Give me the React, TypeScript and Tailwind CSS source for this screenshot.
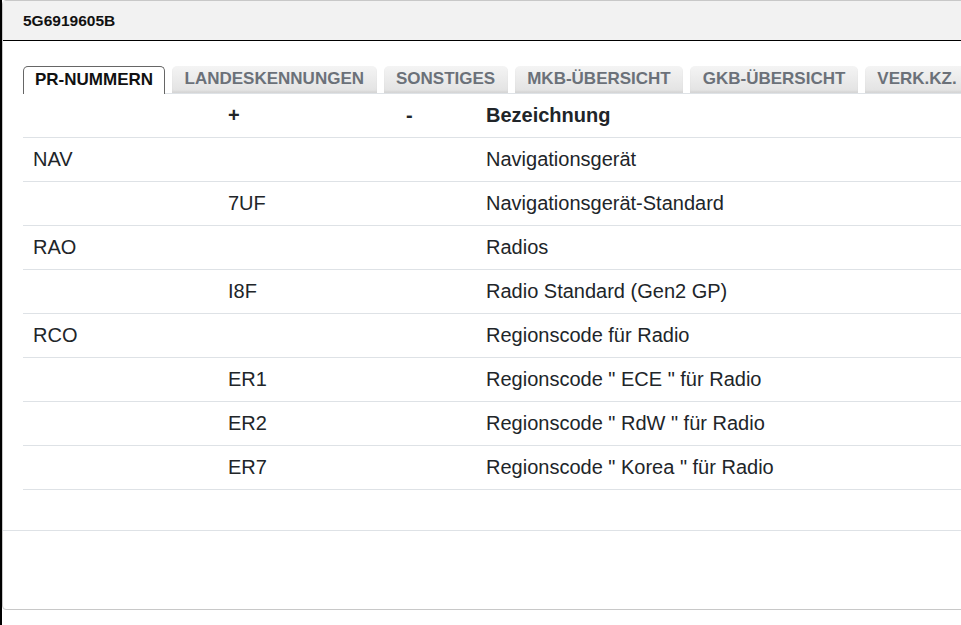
import React from "react";

const tabs = [
  "PR-NUMMERN",
  "LANDESKENNUNGEN",
  "SONSTIGES",
  "MKB-ÜBERSICHT",
  "GKB-ÜBERSICHT",
  "VERK.KZ.",
];

const rows: [string, string, string, string][] = [
  ["NAV", "", "", "Navigationsgerät"],
  ["", "7UF", "", "Navigationsgerät-Standard"],
  ["RAO", "", "", "Radios"],
  ["", "I8F", "", "Radio Standard (Gen2 GP)"],
  ["RCO", "", "", "Regionscode für Radio"],
  ["", "ER1", "", 'Regionscode " ECE " für Radio'],
  ["", "ER2", "", 'Regionscode " RdW " für Radio'],
  ["", "ER7", "", 'Regionscode " Korea " für Radio'],
];

export default function App() {
  return (
    <div
      className="flex h-[625px] w-[961px] overflow-hidden bg-white"
      style={{ fontFamily: '"Liberation Sans", Arial, sans-serif' }}
    >
      <div className="w-[2px] shrink-0 bg-black" />
      <div className="flex h-[610px] w-[1000px] shrink-0 flex-col rounded-l-[4px] border border-[#c8c8c8] bg-white">
        <div className="flex h-[40px] shrink-0 items-center border-b border-black bg-[#f2f2f2] pl-[20px] text-[15.5px] font-bold text-[#111]">
          5G6919605B
        </div>
        <div className="flex flex-col pl-[20px] pt-[25px]">
          <div className="flex items-end gap-[7px] border-b border-[#dee2e6]">
            {tabs.map((t, i) =>
              i === 0 ? (
                <div
                  key={t}
                  className="-mb-px flex h-[28px] items-center rounded-t-[5px] border border-b-0 border-[#666] bg-white px-[11px] pb-[1px] text-[17px] font-bold text-[#111]"
                >
                  {t}
                </div>
              ) : (
                <div
                  key={t}
                  className="flex h-[27px] items-center rounded-t-[5px] bg-gradient-to-b from-[#f4f4f4] to-[#e2e2e2] px-[12.5px] pb-[1px] text-[17px] font-bold text-[#6b7179] shadow-[inset_0_-2px_2px_rgba(0,0,0,0.06)]"
                >
                  {t}
                </div>
              )
            )}
          </div>
          <div className="text-[20px] text-[#212529]">
            <div className="grid h-[44px] grid-cols-[195px_178px_80px_1fr] items-center border-b border-[#dee2e6] pb-[2px] font-bold">
              <div className="px-[10px]"></div>
              <div className="px-[10px]">+</div>
              <div className="px-[10px]">-</div>
              <div className="px-[10px]">Bezeichnung</div>
            </div>
            {rows.map((r, i) => (
              <div
                key={i}
                className="grid h-[44px] grid-cols-[195px_178px_80px_1fr] items-center border-b border-[#dee2e6] pb-[2px]"
              >
                <div className="px-[10px]">{r[0]}</div>
                <div className="px-[10px]">{r[1]}</div>
                <div className="px-[10px]">{r[2]}</div>
                <div className="px-[10px]">{r[3]}</div>
              </div>
            ))}
          </div>
        </div>
        <div className="mt-[40px] border-t border-[#dee2e6]" />
      </div>
    </div>
  );
}
